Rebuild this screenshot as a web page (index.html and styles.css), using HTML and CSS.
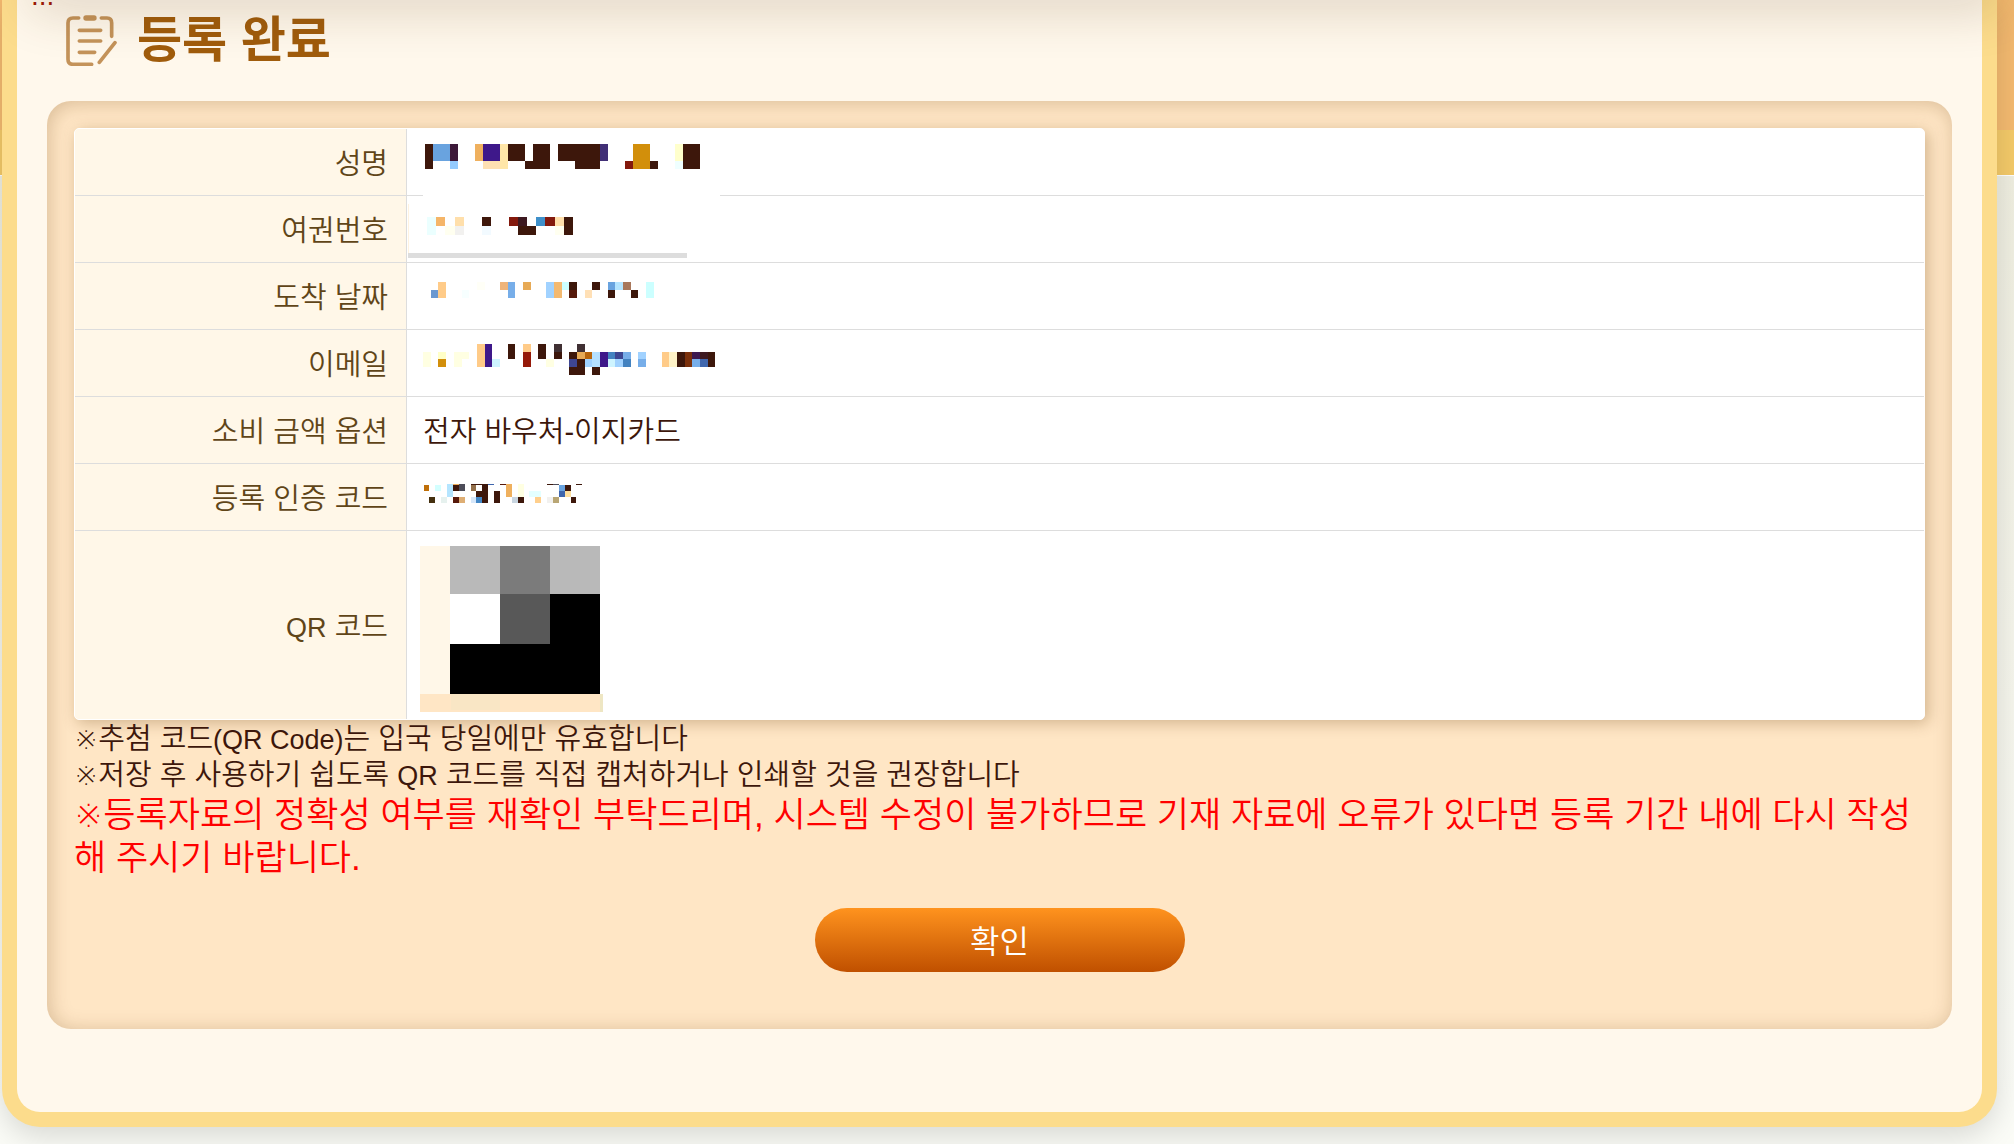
FILE: index.html
```html
<!DOCTYPE html>
<html lang="ko">
<head>
<meta charset="utf-8">
<meta name="viewport" content="width=device-width, initial-scale=1">
<title>등록 완료</title>
<link rel="stylesheet" href="styles.css">
</head>
<body>
<div class="topbar-shadow"></div>
<main class="card">
  <p class="more">...</p>
  <header class="heading">
    <svg class="heading-icon" viewBox="198 42 153 153" aria-hidden="true">
      <path d="M236 51H219Q204 51 204 66V175Q204 190 219 190H275M304 51H321Q335 51 335 66V106M238 88H302M238 120H302M238 154H284M298 184L345 125"/>
      <path class="clip" d="M258 51H282"/>
    </svg>
    <h1 class="title">등록 완료</h1>
  </header>
  <section class="panel">
    <div class="sheet">
      <table class="info">
        <tr>
          <th scope="row">성명</th>
          <td>
            <svg class="mask" viewBox="21 27 1020 201" aria-hidden="true">
              <path fill="#fff" d="M69 180h891v72H69z"/>
              <path fill="#3d170b" d="M75 72h24v75H75zM324 72h51v51h-51zM399 72h51v75h-75v-24h24zM474 72h126v75h-75v-24h-51zM750 123h24v24h-24zM849 72h51v75h-51z"/>
              <path fill="#69a3df" d="M99 72h51v51H99z"/>
              <path fill="#3d1939" d="M150 72h24v51h-24z"/>
              <path fill="#94cbff" d="M150 123h24v24h-24z"/>
              <path fill="#efb05e" d="M225 72h24v51h-24z"/>
              <path fill="#3e188a" d="M249 72h51v51h-51z"/>
              <path fill="#ffe6a8" d="M300 72h24v75h-24z"/>
              <path fill="#ffe0b2" d="M249 123h51v24h-51z"/>
              <path fill="#412f76" d="M600 72h24v51h-24z"/>
              <path fill="#d28f0b" d="M699 72h51v75h-51z"/>
              <path fill="#83190d" d="M675 123h24v24h-24z"/>
              <path fill="#ffc" d="M825 72h24v51h-24z"/>
              <path fill="#efffff" d="M825 123h24v24h-24z"/>
            </svg>
          </td>
        </tr>
        <tr>
          <th scope="row">여권번호</th>
          <td>
            <svg class="mask" viewBox="21 228 1020 201" aria-hidden="true">
              <path fill="#fff3e0" d="M24 252h3v147h-3z"/>
              <path fill="#ddd" d="M24 399h837v15H24z"/>
              <path fill="#ebffff" d="M81 291h27v54H81z"/>
              <path fill="#f5b568" d="M108 291h27v27h-27z"/>
              <path fill="#fffff0" d="M135 318h30v27h-30zM465 318h27v27h-27z"/>
              <path fill="#ffdfab" d="M165 291h27v27h-27zM465 291h27v27h-27z"/>
              <path fill="#f2f1ef" d="M165 318h27v27h-27z"/>
              <path fill="#3d170b" d="M246 291h27v27h-27zM354 318h54v27h-54zM492 291h27v54h-27z"/>
              <path fill="#f2faff" d="M246 318h27v27h-27z"/>
              <path fill="#83190d" d="M327 291h27v27h-27zM435 291h30v27h-30z"/>
              <path fill="#3d1920" d="M354 291h27v27h-27z"/>
              <path fill="#3f90ca" d="M408 291h27v27h-27z"/>
            </svg>
          </td>
        </tr>
        <tr>
          <th scope="row">도착 날짜</th>
          <td>
            <svg class="mask" viewBox="21 429 1020 201" aria-hidden="true">
              <path fill="#6b98d0" d="M93 510h21v24H93z"/>
              <path fill="#ffcb88" d="M114 486h24v48h-24z"/>
              <path fill="#f7ffff" d="M186 510h21v24h-21z"/>
              <path fill="#fffff7" d="M231 486h24v24h-24z"/>
              <path fill="#efb47a" d="M300 486h24v24h-24z"/>
              <path fill="#77aee9" d="M324 486h21v48h-21z"/>
              <path fill="#e7aa56" d="M369 486h24v24h-24z"/>
              <path fill="#a1d2ff" d="M438 486h24v48h-24z"/>
              <path fill="#f3b970" d="M462 486h24v48h-24z"/>
              <path fill="#cff" d="M486 486h21v24h-21zM738 486h24v48h-24z"/>
              <path fill="#3d170b" d="M507 486h24v24h-24zM576 486h24v24h-24zM624 510h21v24h-21zM693 510h21v24h-21z"/>
              <path fill="#56190b" d="M507 510h24v24h-24z"/>
              <path fill="#ffe0b6" d="M555 510h21v24h-21z"/>
              <path fill="#69a3df" d="M624 486h21v24h-21z"/>
              <path fill="#b5e5ff" d="M645 486h24v24h-24z"/>
              <path fill="#a8775b" d="M669 486h24v24h-24z"/>
            </svg>
          </td>
        </tr>
        <tr>
          <th scope="row">이메일</th>
          <td>
            <svg class="mask" viewBox="21 630 1020 201" aria-hidden="true">
              <path fill="#ffffe2" d="M69 696h24v45H69zM162 696h45v21h-21v24h-24zM438 717h24v24h-24z"/>
              <path fill="#ffffc8" d="M114 696h24v21h-24z"/>
              <path fill="#d28f0b" d="M114 717h24v24h-24z"/>
              <path fill="#ffcb88" d="M231 672h24v69h-24zM369 672h24v24h-24zM786 696h21v45h-21z"/>
              <path fill="#3e188a" d="M255 672h21v69h-21zM600 696h24v45h-24z"/>
              <path fill="#cef4ff" d="M276 717h24v24h-24zM624 717h21v24h-21z"/>
              <path fill="#3d170b" d="M324 672h21v45h-21zM414 672h24v45h-24zM462 696h24v21h-24zM507 696h24v21h-24zM531 717h24v48h-48v-24h24zM576 741h24v24h-24zM831 696h24v45h-24zM924 696h21v45h-21z"/>
              <path fill="#951909" d="M369 696h24v45h-24z"/>
              <path fill="#403033" d="M462 672h24v24h-24zM531 672h24v24h-24z"/>
              <path fill="#e7aa56" d="M531 696h24v21h-24z"/>
              <path fill="#b7640b" d="M555 696h21v21h-21z"/>
              <path fill="#3e4692" d="M507 717h24v24h-24zM645 696h24v21h-24z"/>
              <path fill="#b5e0ff" d="M576 696h24v45h-24z"/>
              <path fill="#a1d2ff" d="M555 717h21v24h-21zM645 717h24v24h-24zM714 696h24v21h-24z"/>
              <path fill="#4382c0" d="M624 696h21v21h-21zM669 717h24v24h-24z"/>
              <path fill="#77aee9" d="M669 696h24v21h-24zM714 717h24v24h-24zM876 717h24v24h-24z"/>
              <path fill="#fff3c8" d="M807 696h24v45h-24z"/>
              <path fill="#7b300b" d="M855 696h21v45h-21z"/>
              <path fill="#3d1950" d="M876 696h24v21h-24z"/>
              <path fill="#3d1920" d="M900 696h24v21h-24z"/>
              <path fill="#3f66ad" d="M900 717h24v24h-24z"/>
            </svg>
          </td>
        </tr>
        <tr>
          <th scope="row">소비 금액 옵션</th>
          <td>전자 바우처-이지카드</td>
        </tr>
        <tr>
          <th scope="row">등록 인증 코드</th>
          <td>
            <svg class="mask" viewBox="21 402 1020 201" aria-hidden="true">
              <path fill="#bf6f08" d="M72 465h15v18H72z"/>
              <path fill="#d3ffff" d="M105 465h18v18h-18z"/>
              <path fill="#b5e5ff" d="M141 462h18v39h-18z"/>
              <path fill="#efb05e" d="M159 462h18v3h-18zM318 462h18v39h-18z"/>
              <path fill="#44300f" d="M87 501h18v18H87z"/>
              <path fill="#e6f1ee" d="M123 501h18v18h-18z"/>
              <path fill="#3d170b" d="M159 465h18v18h-18zM213 462h51v57h-18v-18h-18v-18h18v-18h-33zM282 483h18v36h-18zM354 501h18v18h-18zM441 462h18v3h-18zM495 465h18v18h-18zM513 501h15v18h-15zM528 462h18v3h-18z"/>
              <path fill="#4d4d59" d="M177 462h18v21h-18zM459 462h18v3h-18z"/>
              <path fill="#56190b" d="M159 501h18v18h-18zM300 462h18v3h-18z"/>
              <path fill="#deae74" d="M177 501h18v18h-18z"/>
              <path fill="#94714b" d="M213 465h15v18h-15z"/>
              <path fill="#d6e7fa" d="M213 501h15v18h-15z"/>
              <path fill="#4387c6" d="M228 501h18v18h-18z"/>
              <path fill="#3f66ad" d="M264 462h18v3h-18zM477 483h18v18h-18z"/>
              <path fill="#c8d5e0" d="M336 501h18v18h-18z"/>
              <path fill="#ffffe2" d="M354 462h18v39h-18z"/>
              <path fill="#e4ffff" d="M387 483h36v18h-36z"/>
              <path fill="#ffcf8c" d="M405 501h18v18h-18z"/>
              <path fill="#f2f1ef" d="M441 501h18v18h-18z"/>
              <path fill="#b9a674" d="M459 501h18v18h-18z"/>
              <path fill="#69a3df" d="M477 465h18v18h-18z"/>
              <path fill="#ffdf9e" d="M495 483h18v18h-18z"/>
            </svg>
          </td>
        </tr>
        <tr class="qr-row">
          <th scope="row"><span class="latin">QR</span> 코드</th>
          <td>
            <svg class="qr" viewBox="60 108 549 498" role="img" aria-label="QR 코드">
              <path fill="#fff7e8" d="M60 108h90v444H60z"/>
              <path fill="#b9b9b9" d="M150 108h450v144H150z"/>
              <path fill="#7b7b7b" d="M300 108h150v144H300z"/>
              <path fill="#585858" d="M300 252h150v150H300z"/>
              <path d="M450 252h150v300H150V402h300z"/>
              <path fill="#ffe6c5" d="M60 552h540v54H60z"/>
              <path fill="#f9e6c5" d="M153 552h147v48H153z"/>
              <path fill="#eee6c3" d="M600 552h9v54h-9z"/>
            </svg>
          </td>
        </tr>
      </table>
    </div>
    <p class="note">※추첨 코드<span class="latin">(QR Code)</span>는 입국 당일에만 유효합니다</p>
    <p class="note">※저장 후 사용하기 쉽도록 <span class="latin">QR</span> 코드를 직접 캡처하거나 인쇄할 것을 권장합니다</p>
    <p class="warning">※등록자료의 정확성 여부를 재확인 부탁드리며, 시스템 수정이 불가하므로 기재 자료에 오류가 있다면 등록 기간 내에 다시 작성해 주시기 바랍니다.</p>
    <button class="confirm" type="button">확인</button>
  </section>
</main>
</body>
</html>
```

FILE: styles.css
```css
* {
  box-sizing: border-box;
}

body {
  margin: 0;
  min-height: 100vh;
  overflow: hidden;
  background:
    linear-gradient(#f4ba70 0 130px, #f4ca69 130px 175px, #fff 175px 176px, transparent 176px),
    linear-gradient(#efeee0 176px, #fbfcf7 1100px);
  color: #3d170b;
  font-family: "Liberation Sans", "DejaVu Sans", "Noto Sans CJK KR", sans-serif;
  font-size: 29px;
  font-weight: 350;
  line-height: 36px;
}

p,
h1 {
  margin: 0;
}

.topbar-shadow {
  position: fixed;
  z-index: 5;
  top: -40px;
  left: 30px;
  right: 10px;
  height: 40px;
  box-shadow: 0 10px 50px rgba(80, 50, 10, 0.2);
}

.card {
  display: flow-root;
  margin: 0 17px 0 2px;
  padding: 0 30px 83px;
  border: 15px solid #fcdc8c;
  border-top: 0;
  border-radius: 0 0 38px 38px;
  background: #fff8ec;
  box-shadow: 0 10px 30px rgba(0, 0, 0, 0.14);
}

.more {
  margin: -20px 0 0 -16px;
  color: #a01808;
  font-size: 28px;
  line-height: 32px;
}

.heading {
  display: flex;
  align-items: center;
  gap: 20px;
  height: 56px;
  margin-bottom: 33px;
  padding-left: 19px;
}

.heading-icon {
  width: 51px;
  height: 51px;
  fill: none;
  stroke: #c4935a;
  stroke-width: 11;
  stroke-linecap: round;
}

.clip {
  stroke-width: 16;
}

.title {
  color: #a05c0c;
  font-size: 49px;
  font-weight: 700;
  line-height: 56px;
}

.panel {
  padding: 27px 27px 57px;
  border-radius: 24px;
  background: #ffe6c5;
  box-shadow: inset 2px 2px 20px rgba(100, 60, 10, 0.25);
}

.sheet {
  overflow: hidden;
  margin-bottom: 1px;
  border: 1px solid #fff;
  border-radius: 5px;
  background: #fff;
  box-shadow: 3px 3px 15px rgba(100, 60, 10, 0.3);
}

.info {
  width: 100%;
  border-collapse: separate;
  border-spacing: 0;
  table-layout: fixed;
}

.info th,
.info td {
  height: 67px;
  padding: 4px 16px 0;
  border-bottom: 1px solid #ddd;
  text-align: left;
}

.info th {
  width: 332px;
  padding-right: 18px;
  border-right: 1px solid #ddd;
  background: #fff7e8;
  color: #604518;
  font-weight: 350;
  text-align: right;
}

.info td {
  position: relative;
}

.info .qr-row th,
.info .qr-row td {
  height: 188px;
  border-bottom: 0;
}

.info .qr-row td {
  padding: 15px 13px 0;
  vertical-align: top;
}

.mask {
  position: absolute;
  z-index: 1;
  top: 0;
  left: 0;
  width: 340px;
  height: 67px;
  overflow: visible;
  shape-rendering: crispEdges;
}

.qr {
  display: block;
  width: 183px;
  height: 166px;
  shape-rendering: crispEdges;
}

.latin {
  font-size: 27px;
  line-height: 1;
}

.warning {
  color: #f00;
  font-size: 35px;
  line-height: 43px;
}

.confirm {
  display: block;
  width: 370px;
  height: 64px;
  margin: 29px auto 0;
  padding: 4px 0 0;
  border: 0;
  border-radius: 32px;
  background: linear-gradient(#ff931e, #c05000);
  color: #fff;
  font: inherit;
  font-size: 32px;
}
```
